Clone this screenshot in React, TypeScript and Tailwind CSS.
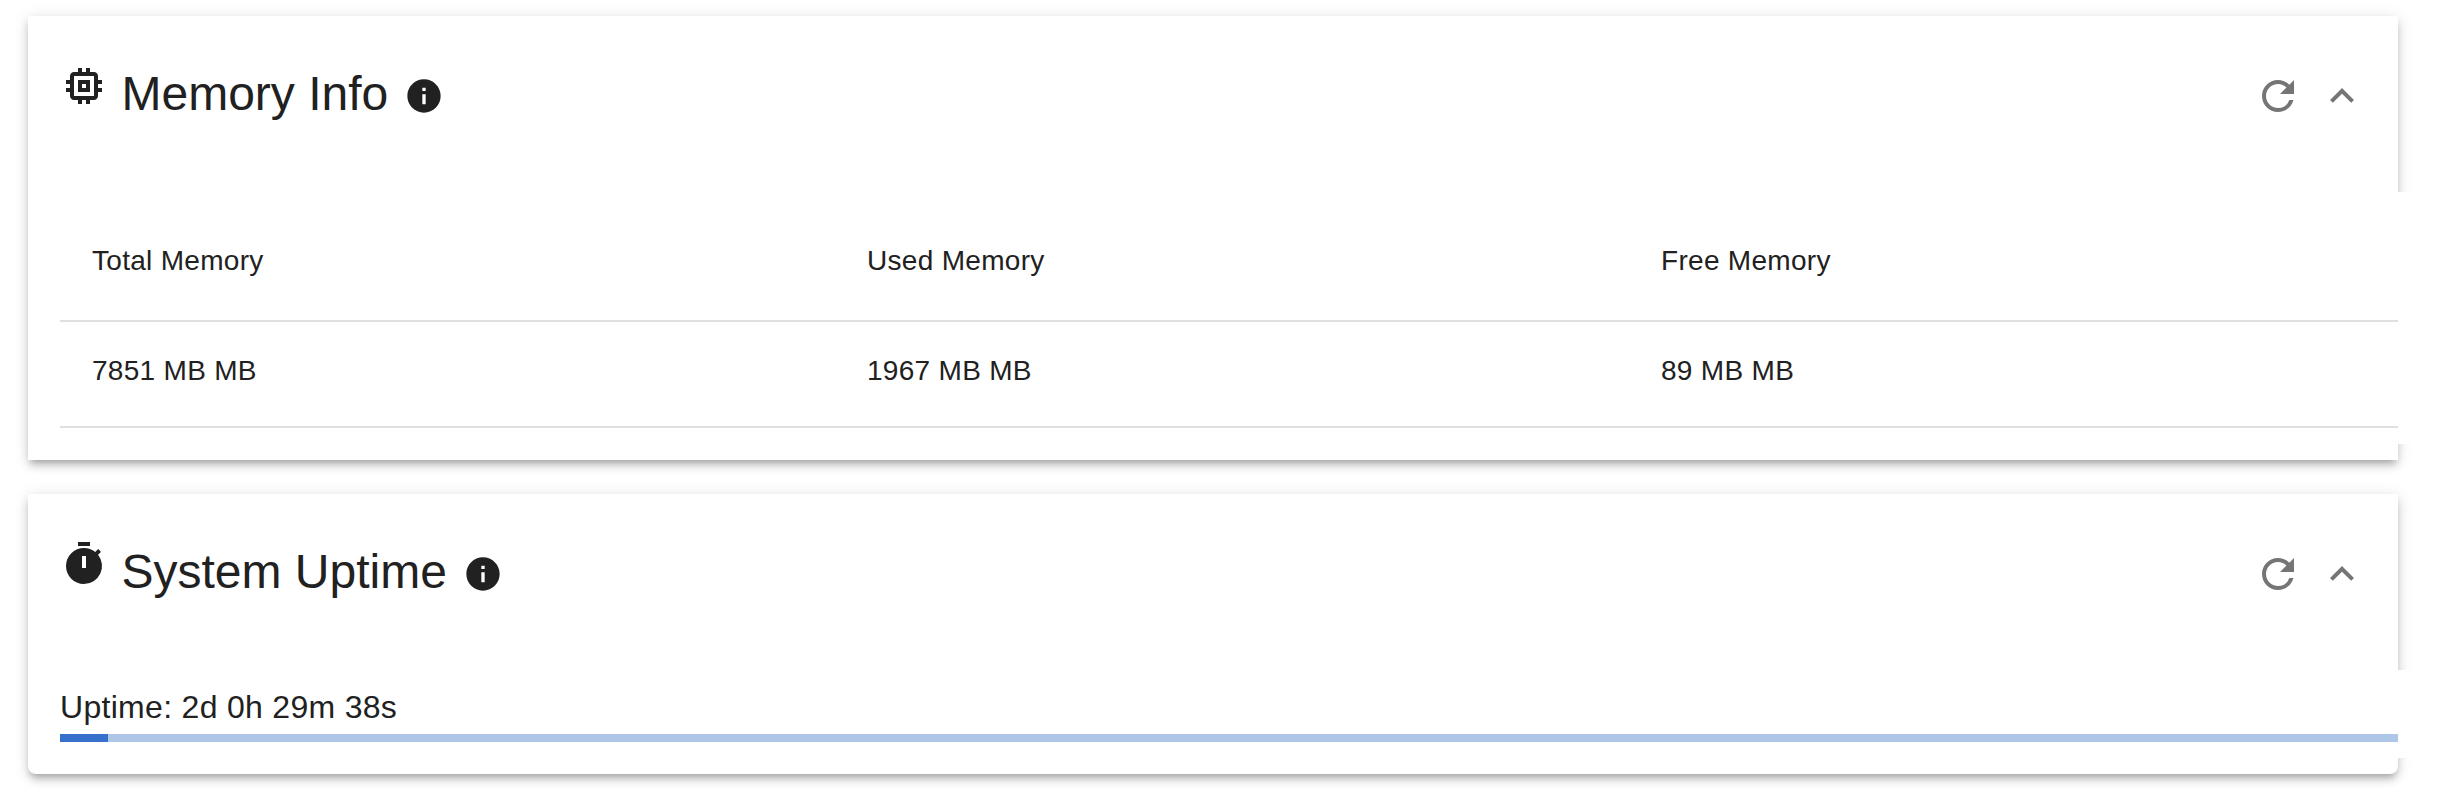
import React from "react";
import { MdExpandLess, MdInfo, MdMemory, MdRefresh, MdTimer } from "react-icons/md";

type PanelProps = {
  icon: React.ReactNode;
  title: string;
  shape: string;
  children: React.ReactNode;
};

function Panel({ icon, title, shape, children }: PanelProps) {
  return (
    <section
      className={`w-[2370px] bg-white pb-4 shadow-[0_6px_6px_-4px_rgba(0,0,0,0.2),0_6px_8px_0_rgba(0,0,0,0.14),0_2px_16px_0_rgba(0,0,0,0.12)] ${shape}`}
    >
      <header className="flex h-44 items-start justify-between px-8 pt-[46px]">
        <div className="flex items-start">
          {icon}
          <h2 className="ml-[13.5px] text-[48px] leading-[64px]">{title}</h2>
          <MdInfo className="ml-4 mt-[14px] size-10" />
        </div>
        <div className="mt-[10px] flex gap-4 text-[#757575]">
          <button type="button" aria-label="Refresh">
            <MdRefresh className="size-12" />
          </button>
          <button type="button" aria-label="Collapse">
            <MdExpandLess className="size-12" />
          </button>
        </div>
      </header>
      <div className="-mr-10 bg-white pl-8 pr-10">{children}</div>
    </section>
  );
}

export default function App() {
  const progress = 2.05;
  return (
    <main className="flex h-[800px] flex-col gap-[34px] overflow-hidden bg-white pl-7 pt-4 font-['Liberation_Sans',Arial,sans-serif] text-[#212121]">
      <Panel title="Memory Info" shape="rounded-t-[2px]" icon={<MdMemory className="size-12" />}>
        <div className="pb-4 pt-4">
          <table className="w-full table-fixed border-separate border-spacing-0 text-left text-[28px] leading-[48px] tracking-[0.3px]">
            <colgroup>
              <col className="w-[775px]" />
              <col className="w-[794px]" />
              <col />
            </colgroup>
            <thead>
              <tr>
                {["Total Memory", "Used Memory", "Free Memory"].map((label) => (
                  <th key={label} className="h-[114px] border-b-2 border-[#e0e0e0] px-8 pb-[6px] font-normal">
                    {label}
                  </th>
                ))}
              </tr>
            </thead>
            <tbody>
              <tr>
                {["7851 MB MB", "1967 MB MB", "89 MB MB"].map((value) => (
                  <td key={value} className="h-[106px] border-b-2 border-[#e0e0e0] px-8 pb-[6px]">
                    {value}
                  </td>
                ))}
              </tr>
            </tbody>
          </table>
        </div>
      </Panel>
      <Panel title="System Uptime" shape="rounded-t-[2px] rounded-b-lg" icon={<MdTimer className="size-12" />}>
        <div className="pb-4 pt-4">
          <p className="h-12 text-[32px] leading-[42px] tracking-[0.3px]">Uptime: 2d 0h 29m 38s</p>
          <div className="h-2 bg-[#aec7e9]">
            <div className="h-2 bg-[#3771cb]" style={{ width: `${progress}%` }} />
          </div>
        </div>
      </Panel>
    </main>
  );
}
